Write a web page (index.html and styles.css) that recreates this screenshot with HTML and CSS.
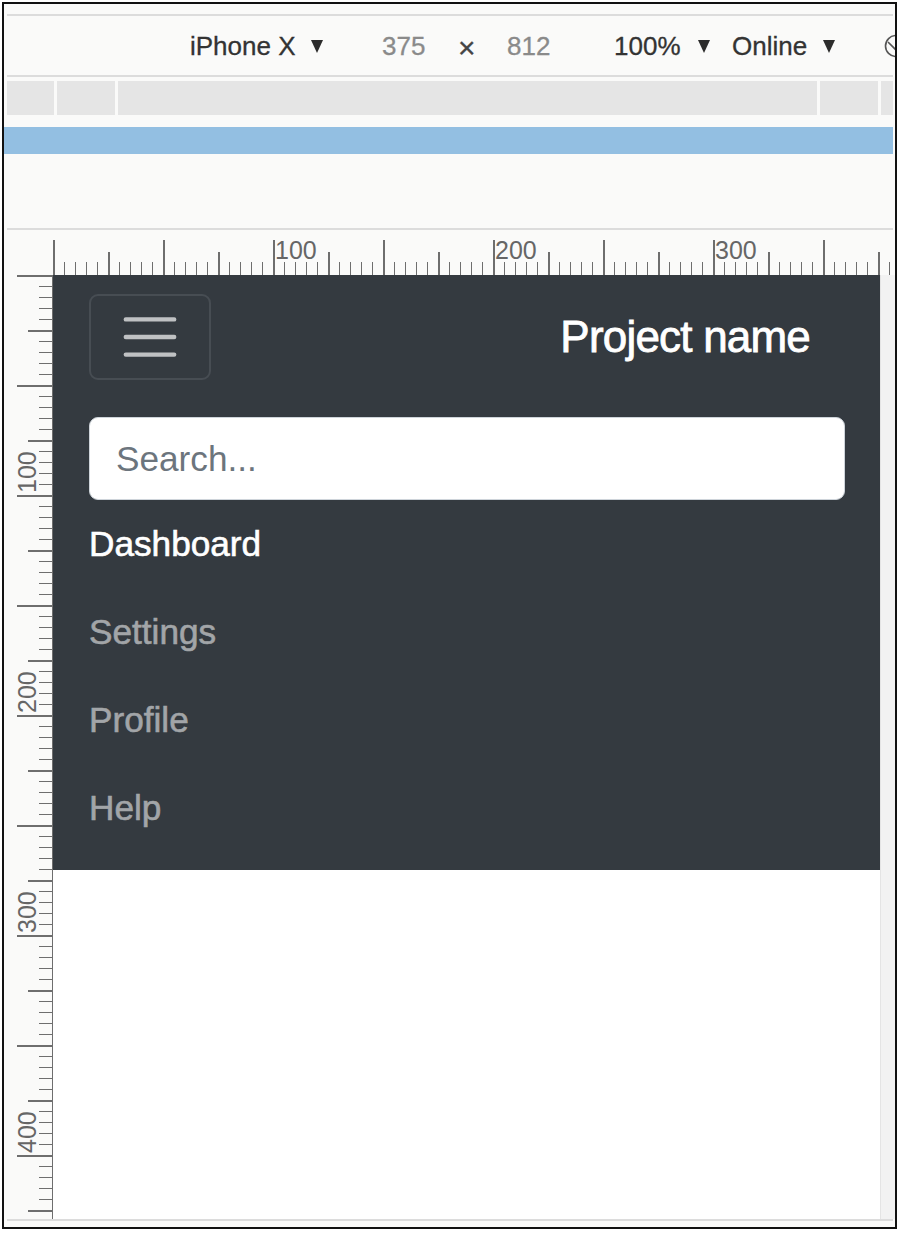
FILE: index.html
```html
<!DOCTYPE html>
<html lang="en">
<head>
<meta charset="utf-8">
<title>Responsive preview</title>
<link rel="stylesheet" href="styles.css">
</head>
<body>
<div class="frame">
  <header class="devhead">
    <div class="hline"></div>
    <div class="toolbar">
      <span class="tb-select tb-device"><span>iPhone X</span><i class="caret"></i></span>
      <span class="tb-num tb-w">375</span>
      <span class="tb-times">×</span>
      <span class="tb-num tb-h">812</span>
      <span class="tb-select tb-zoom"><span>100%</span><i class="caret"></i></span>
      <span class="tb-select tb-net"><span>Online</span><i class="caret"></i></span>
      <svg class="tb-rotate" width="26" height="26" viewBox="0 0 26 26" aria-hidden="true">
        <circle cx="13" cy="13" r="10.5" fill="none" stroke="#555" stroke-width="1.6"/>
        <path d="M5 9 L13 17 L21 9" fill="none" stroke="#555" stroke-width="1.6"/>
      </svg>
    </div>
    <div class="hline"></div>
    <div class="mq-bar">
      <span class="mq mq-a"></span>
      <span class="mq mq-b"></span>
      <span class="mq mq-c"></span>
      <span class="mq mq-b"></span>
      <span class="mq mq-e"></span>
    </div>
    <div class="blue-bar"></div>
    <div class="spacer"></div>
    <div class="hline"></div>
  </header>

  <div class="workspace">
    <div class="corner"></div>
    <div class="ruler-h">
      <span class="rlabel-h h100">100</span>
      <span class="rlabel-h h200">200</span>
      <span class="rlabel-h h300">300</span>
    </div>
    <div class="ruler-v">
      <span class="rlabel-v v100">100</span>
      <span class="rlabel-v v200">200</span>
      <span class="rlabel-v v300">300</span>
      <span class="rlabel-v v400">400</span>
    </div>
    <div class="viewport">
      <div class="page">
        <nav class="navbar">
          <div class="nav-top">
            <button class="toggler" type="button" aria-label="Toggle navigation">
              <svg width="66" height="66" viewBox="0 0 30 30" aria-hidden="true">
                <path d="M4 7h22M4 15h22M4 23h22" stroke="#bfc1c3" stroke-width="2" stroke-linecap="round" fill="none"/>
              </svg>
            </button>
            <a class="brand" href="#">Project name</a>
          </div>
          <form class="search">
            <input class="search-input" type="text" placeholder="Search...">
          </form>
          <ul class="nav">
            <li><a class="nav-link active" href="#">Dashboard</a></li>
            <li><a class="nav-link" href="#">Settings</a></li>
            <li><a class="nav-link" href="#">Profile</a></li>
            <li><a class="nav-link" href="#">Help</a></li>
          </ul>
        </nav>
      </div>
      <div class="scrollbar"></div>
    </div>
  </div>
  <div class="hline"></div>
  <div class="foot"></div>
</div>
</body>
</html>
```

FILE: styles.css
```css
html, body {
  margin: 0;
  padding: 0;
  background: #fff;
}

body {
  font-family: "Liberation Sans", Arial, sans-serif;
}

.frame {
  margin: 2px 0 0 2px;
  width: 895px;
  height: 1227px;
  box-sizing: border-box;
  border: 2px solid #111;
  background: #fafaf9;
  display: flex;
  flex-direction: column;
  overflow: hidden;
}

/* ---------- devtools header ---------- */
.devhead {
  height: 226px;
  padding-top: 10px;
  box-sizing: border-box;
  display: flex;
  flex-direction: column;
  flex: none;
}

.hline {
  height: 2px;
  margin: 0 2px 0 3px;
  background: #dcdcdc;
  flex: none;
}

.toolbar {
  height: 59px;
  display: flex;
  align-items: center;
  padding-left: 186px;
  font-size: 26px;
  line-height: 26px;
  color: #333;
  white-space: nowrap;
  -webkit-text-stroke: 0.3px currentColor;
}

.toolbar > * {
  flex: none;
}

.tb-select {
  display: flex;
  align-items: center;
  justify-content: space-between;
}

.tb-device { width: 133px; }
.tb-zoom { width: 96px; margin-left: 63px; }
.tb-net { width: 103px; margin-left: 22px; }

.caret {
  width: 0;
  height: 0;
  border-left: 6px solid transparent;
  border-right: 6px solid transparent;
  border-top: 13px solid #2c2c2c;
  margin-top: 2px;
}

.tb-num {
  width: 44px;
  color: #8a8a8a;
}
.tb-w { margin-left: 59px; }
.tb-h { margin-left: 32px; }

.tb-times {
  width: 17px;
  margin-left: 32px;
  text-align: center;
  font-size: 30px;
  color: #444;
  position: relative;
  top: 2px;
}

.tb-rotate {
  margin-left: 48px;
}

.mq-bar {
  margin: 4px 2px 0 3px;
  height: 34px;
  display: flex;
  gap: 3px;
  flex: none;
}

.mq { background: #e5e5e5; }
.mq-a { width: 47px; }
.mq-b { width: 58px; }
.mq-c { flex: 1; }
.mq-e { width: 12px; }

.blue-bar {
  margin: 12px 2px 0 0;
  height: 27px;
  background: #93bfe2;
  flex: none;
}

.spacer { flex: 1; }

/* ---------- rulers + viewport ---------- */
.workspace {
  height: 989px;
  flex: none;
  display: grid;
  grid-template-columns: 49px 1fr;
  grid-template-rows: 45px 1fr;
}

.ruler-h {
  position: relative;
  background:
    linear-gradient(to right, #6e6e6e 1.5px, transparent 1.5px) left bottom / 110px 35px repeat-x,
    linear-gradient(to right, #6e6e6e 1.5px, transparent 1.5px) left bottom / 55px 23px repeat-x,
    linear-gradient(to right, #6e6e6e 1.5px, transparent 1.5px) left bottom / 11px 13px repeat-x;
}

.ruler-v {
  position: relative;
  border-right: 1px solid #6e6e6e;
  background:
    linear-gradient(to bottom, #6e6e6e 1.5px, transparent 1.5px) right top / 35px 110px repeat-y,
    linear-gradient(to bottom, #6e6e6e 1.5px, transparent 1.5px) right top / 24px 55px repeat-y,
    linear-gradient(to bottom, #6e6e6e 1.5px, transparent 1.5px) right top / 13px 11px repeat-y;
}

.rlabel-h,
.rlabel-v {
  position: absolute;
  font-size: 25px;
  line-height: 25px;
  color: #666;
  white-space: nowrap;
}

.rlabel-h { top: 8px; }
.h100 { left: 222px; }
.h200 { left: 442px; }
.h300 { left: 662px; }

.rlabel-v {
  left: 11px;
  transform-origin: 0 0;
  transform: rotate(-90deg);
}
.v100 { top: 218px; }
.v200 { top: 438px; }
.v300 { top: 658px; }
.v400 { top: 878px; }

.viewport {
  display: flex;
  background: #fff;
}

.page {
  width: 827px;
  flex: none;
  background: #fff;
}

.scrollbar {
  flex: 1;
  background: #f2f2f2;
  border-left: 1px solid #e4e4e4;
}

.foot {
  flex: 1;
}

/* ---------- the previewed page (Bootstrap-like navbar at 2.2x) ---------- */
.navbar {
  background: #343a40;
  padding: 18px 35px 18px 36px;
}

.nav-top {
  display: flex;
  align-items: center;
  justify-content: space-between;
}

.toggler {
  width: 122px;
  height: 86px;
  box-sizing: border-box;
  padding: 0;
  margin: 0;
  border: 2px solid #474d53;
  border-radius: 9px;
  background: transparent;
  display: flex;
  align-items: center;
  justify-content: center;
}

.toggler svg { display: block; }

.brand {
  font-size: 44px;
  line-height: 66px;
  padding: 11px 0;
  margin-right: 35px;
  letter-spacing: -0.8px;
  color: #fff;
  text-decoration: none;
  white-space: nowrap;
  -webkit-text-stroke: 0.8px #fff;
}

.search {
  margin: 36px 0 0;
}

.search-input {
  display: block;
  width: 100%;
  height: 83px;
  box-sizing: border-box;
  margin: 0;
  padding: 0 26px;
  border: 1px solid #ced4da;
  border-radius: 9px;
  background: #fff;
  font-family: "Liberation Sans", Arial, sans-serif;
  font-size: 35.2px;
  color: #495057;
  outline: none;
}

.search-input::placeholder {
  color: #6c757d;
  opacity: 1;
}

.nav {
  list-style: none;
  margin: 0;
  padding: 0;
}

.nav-link {
  display: block;
  padding: 18px 0;
  font-size: 35.2px;
  line-height: 52px;
  color: #a2a5a8;
  text-decoration: none;
  -webkit-text-stroke: 0.6px currentColor;
}

.nav-link.active {
  color: #fff;
}
```
